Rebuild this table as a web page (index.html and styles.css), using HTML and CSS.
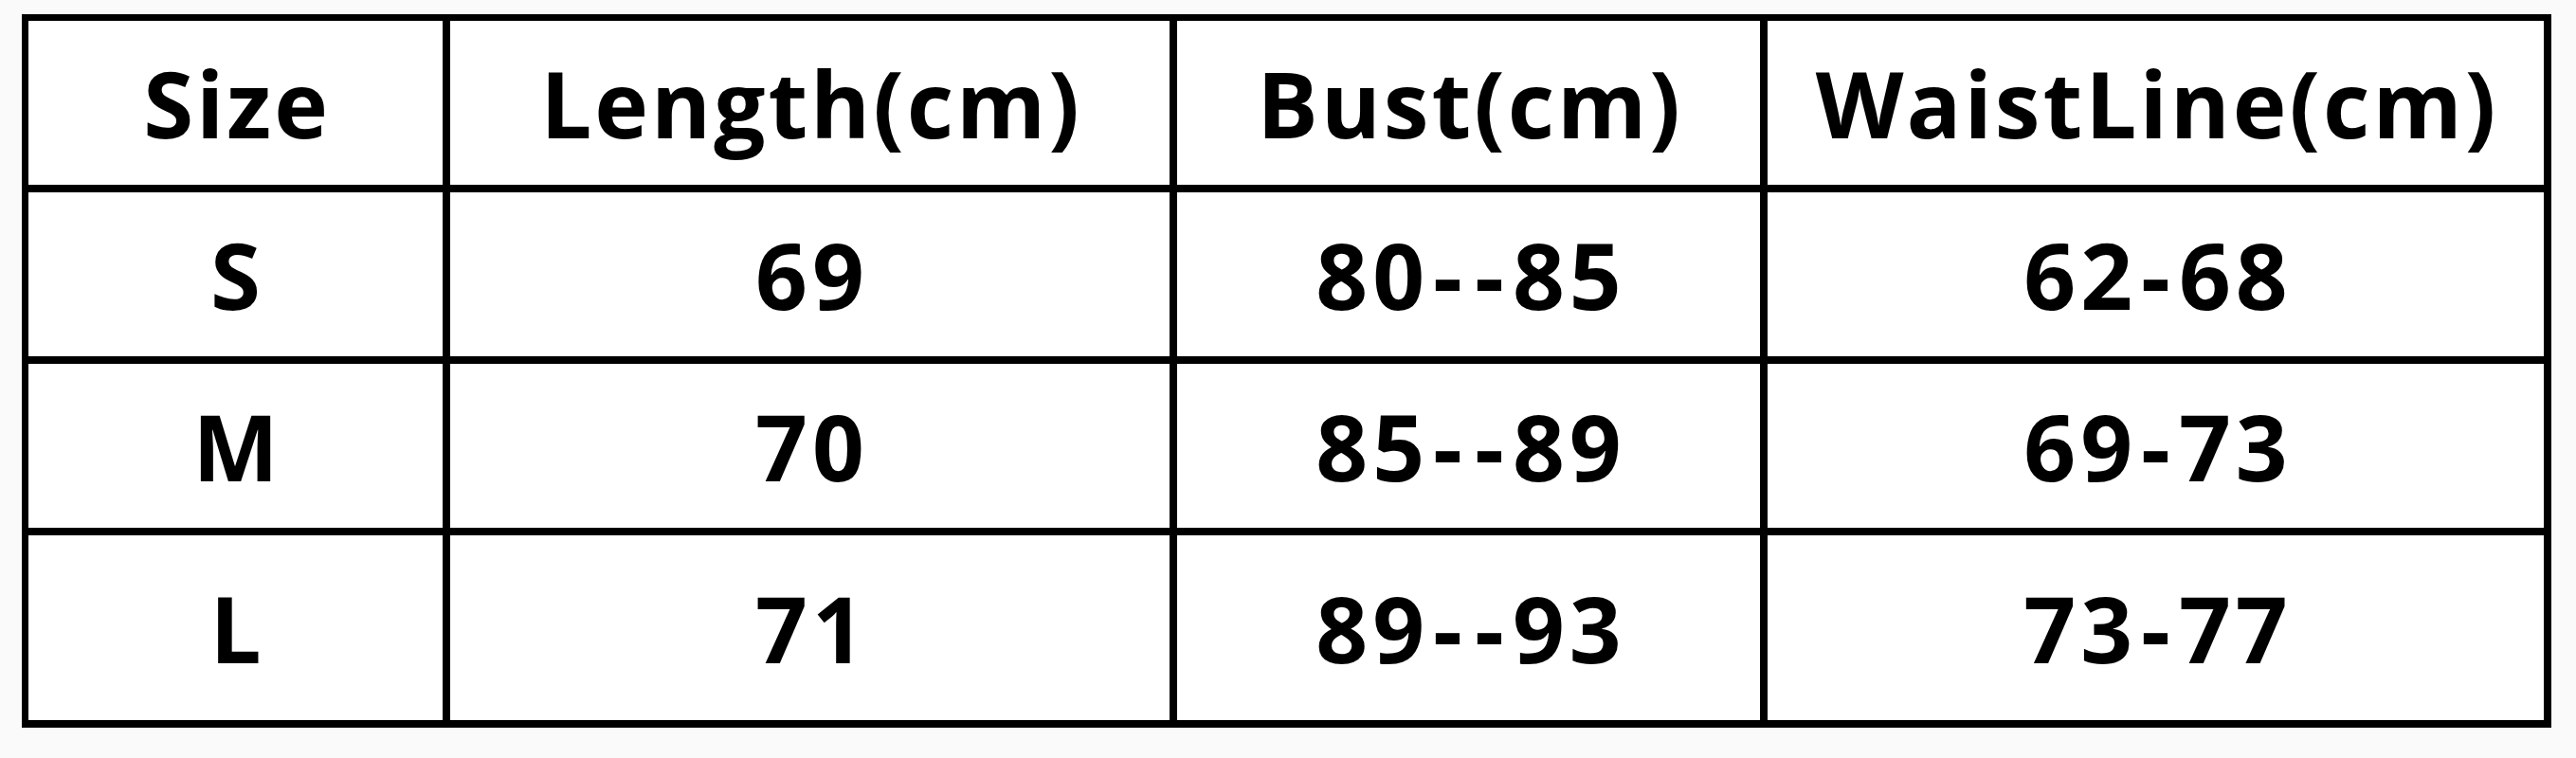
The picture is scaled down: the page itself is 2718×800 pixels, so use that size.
FILE: index.html
```html
<!DOCTYPE html>
<html>
<head>
<meta charset="utf-8">
<link rel="stylesheet" href="styles.css">
</head>
<body>
<div class="page">
  <div class="size-table">
    <div class="cell head">Size</div>
    <div class="cell head">Length(cm)</div>
    <div class="cell head">Bust(cm)</div>
    <div class="cell head">WaistLine(cm)</div>
    <div class="cell head">S</div>
    <div class="cell num">69</div>
    <div class="cell num">80<span class="dash">-</span><span class="dash">-</span>85</div>
    <div class="cell num">62<span class="dash">-</span>68</div>
    <div class="cell head">M</div>
    <div class="cell num">70</div>
    <div class="cell num">85<span class="dash">-</span><span class="dash">-</span>89</div>
    <div class="cell num">69<span class="dash">-</span>73</div>
    <div class="cell head">L</div>
    <div class="cell num">71</div>
    <div class="cell num">89<span class="dash">-</span><span class="dash">-</span>93</div>
    <div class="cell num">73<span class="dash">-</span>77</div>
  </div>
</div>
</body>
</html>
```

FILE: styles.css
```css
html, body {
  margin: 0;
  padding: 0;
  background: #fafafa;
}
.page {
  padding: 15px 0 0 23px;
}
.size-table {
  display: grid;
  grid-template-columns: 437px 759px 615px 819px;
  grid-template-rows: 173px 173px 173px 195px;
  gap: 8px;
  padding: 7px 8px 8px 7px;
  background: #000;
  width: max-content;
}
.cell {
  background: #fff;
  display: flex;
  align-items: center;
  justify-content: center;
  font-family: "Open Sans", "Noto Sans", sans-serif;
  font-weight: 700;
  font-size: 96px;
  color: #000;
  line-height: 1;
  white-space: pre;
}
.head {
  letter-spacing: 3px;
  padding-left: 3px;
}
.num {
  letter-spacing: 5px;
  padding-left: 5px;
}
.dash {
  padding: 0 4px;
}
```
